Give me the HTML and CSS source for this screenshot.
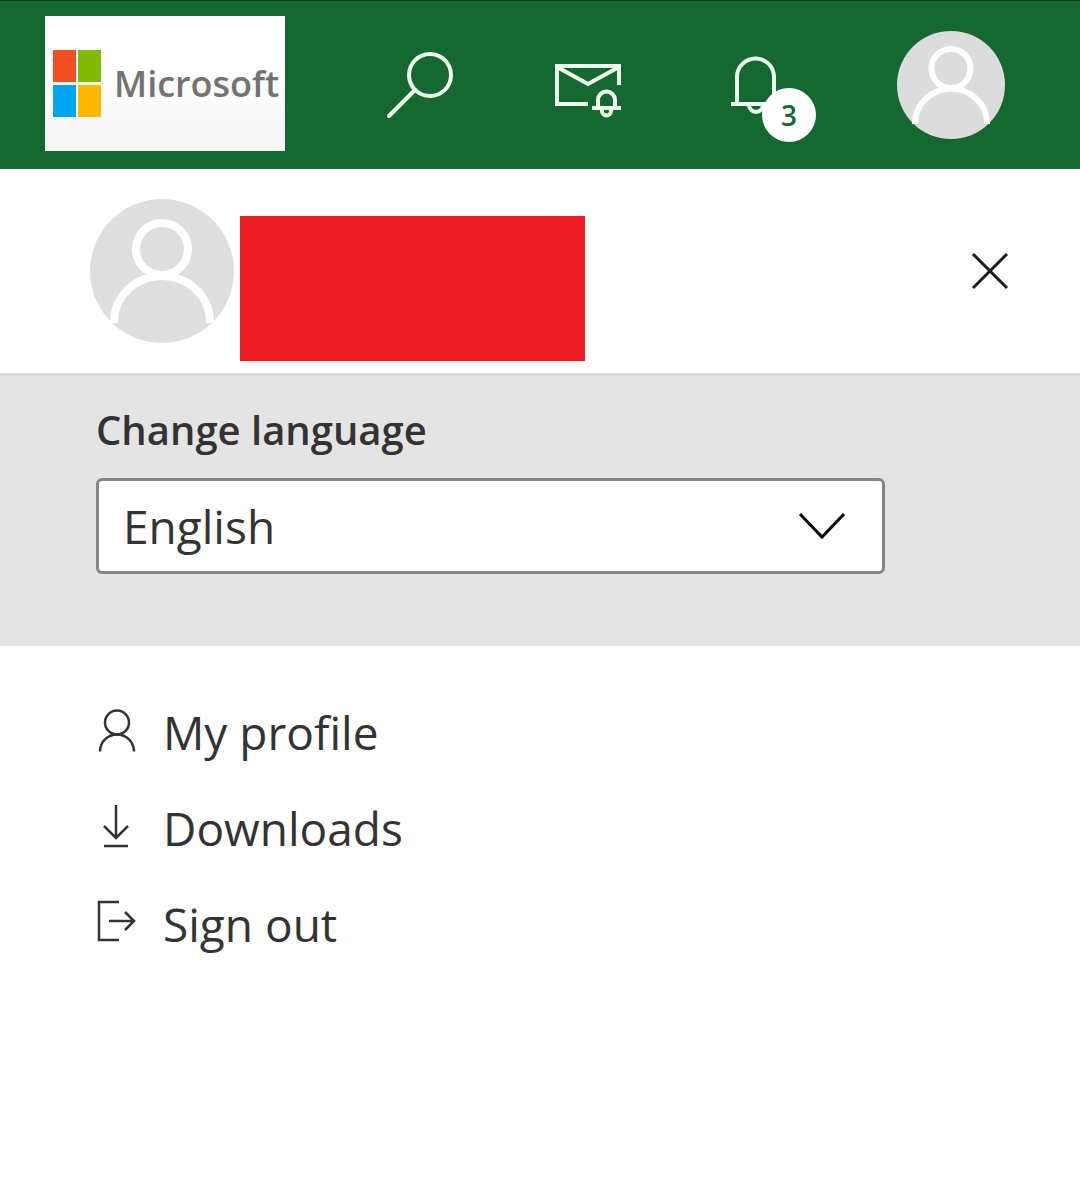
FILE: index.html
```html
<!DOCTYPE html>
<html lang="en">
<head>
<meta charset="utf-8">
<meta name="viewport" content="width=device-width, initial-scale=1">
<title>Account menu</title>
<link rel="stylesheet" href="styles.css">
</head>
<body>
<header class="topbar">
  <a class="logo" href="#" aria-label="Microsoft home">
    <svg class="logo-mark" viewBox="0 0 50 70" aria-hidden="true">
      <path fill="#f25022" d="M1 1h23v32H1z"/>
      <path fill="#7fba00" d="M26 1h23v32H26z"/>
      <path fill="#00a4ef" d="M1 36h23v32H1z"/>
      <path fill="#ffb900" d="M26 36h23v32H26z"/>
    </svg>
    <span class="logo-text">Microsoft</span>
  </a>
  <nav class="actions" aria-label="Site tools">
    <button class="icon-button" type="button" aria-label="Search">
      <svg viewBox="0 0 96 96"><g fill="none" stroke="#eeffee" stroke-width="4" stroke-linecap="round"><circle cx="55" cy="38" r="21"/><path d="M40 53 14 79"/></g></svg>
    </button>
    <button class="icon-button" type="button" aria-label="Messages">
      <svg viewBox="0 0 96 96"><g fill="none" stroke="#eeffee" stroke-width="4"><path d="M45 67H14V29h62v19M14 30l31 17 31-17M49 71h29M55 71v-8a8.500 8.500 0 0 1 17 0v8M59 71v3a4.500 4.500 0 0 0 9 0v-3"/></g></svg>
    </button>
    <button class="icon-button" type="button" aria-label="Notifications, 3 unread">
      <svg viewBox="0 0 96 96"><g fill="none" stroke="#eeffee" stroke-width="4"><path d="M20 67h48M26 67V40a18.500 18.500 0 0 1 37 0v27M38 68a7 7 0 0 0 14 0"/></g></svg>
      <span class="badge">3</span>
    </button>
  </nav>
  <button class="avatar avatar-small" type="button" aria-label="Account">
    <svg viewBox="0 0 144 144"><circle cx="72" cy="72" r="72" fill="#dcdcdc"/><g fill="none" stroke="#fff" stroke-width="8"><circle cx="72" cy="50" r="26"/><path d="M24 124v-1a48 46 0 0 1 96 0v1"/></g></svg>
  </button>
</header>
<main>
  <section class="profile" aria-label="Account">
    <div class="avatar">
      <svg viewBox="0 0 144 144" aria-hidden="true"><circle cx="72" cy="72" r="72" fill="#dedede"/><g fill="none" stroke="#fff" stroke-width="8"><circle cx="72" cy="50" r="26"/><path d="M24 124v-1a48 46 0 0 1 96 0v1"/></g></svg>
    </div>
    <div class="redaction"></div>
    <button class="icon-button close" type="button" aria-label="Close">
      <svg viewBox="0 0 96 96"><path d="m31 31 34 34m0-34L31 65" fill="none" stroke="#1b1b1b" stroke-width="3"/></svg>
    </button>
  </section>
  <section class="language">
    <label class="language-label" for="language">Change language</label>
    <div class="select">
      <select id="language"><option>English</option></select>
      <svg class="chevron" viewBox="0 0 48 28" aria-hidden="true"><path d="m2 2 22 23L46 2" fill="none" stroke="#000" stroke-width="3"/></svg>
    </div>
  </section>
  <nav aria-label="Account links">
    <ul class="menu">
      <li><a href="#"><svg viewBox="0 0 40 48" aria-hidden="true"><g fill="none" stroke="#333" stroke-width="2.500"><circle cx="21" cy="14.500" r="12"/><path d="M4 43.500a17 17 0 0 1 34 0"/></g></svg>My profile</a></li>
      <li><a href="#"><svg viewBox="0 0 40 48" aria-hidden="true"><path d="M20 1v33M8 22l12 12 12-12M8 42h24" fill="none" stroke="#333" stroke-width="2.500"/></svg>Downloads</a></li>
      <li><a href="#"><svg viewBox="0 0 40 48" aria-hidden="true"><path d="M23 2H3v38h20M13 21h25M29 12l9 9-9 9" fill="none" stroke="#333" stroke-width="2.500"/></svg>Sign out</a></li>
    </ul>
  </nav>
</main>
</body>
</html>
```
FILE: styles.css
```css
* { box-sizing: border-box; }

body {
  margin: 0;
  background: #fff;
  color: #333;
  font-family: "Open Sans", "Noto Sans", sans-serif;
  font-size: 46px;
}

button {
  padding: 0;
  border: 0;
  background: none;
  font: inherit;
}

svg {
  display: block;
  flex-shrink: 0;
}

.topbar {
  display: flex;
  align-items: center;
  justify-content: space-between;
  padding: 15px 75px 15px 45px;
  border-top: 1px solid #0b3a19;
  background: #156830;
}

.logo {
  display: flex;
  align-items: center;
  gap: 12px;
  width: 240px;
  height: 135px;
  margin-bottom: 3px;
  padding-left: 7px;
  background: linear-gradient(#fff 40%, #f5f5f5);
  color: #737373;
  text-decoration: none;
}

.logo-mark { width: 50px; height: 70px; }

.logo-text {
  font-size: 36px;
  font-weight: 600;
  line-height: 60px;
}

.actions { display: flex; gap: 72px; }

.icon-button {
  position: relative;
  width: 96px;
  height: 96px;
}

.badge {
  position: absolute;
  top: 51px;
  left: 51px;
  width: 54px;
  border-radius: 50%;
  background: #fff;
  color: #156830;
  font-size: 28px;
  font-weight: 600;
  line-height: 54px;
  text-align: center;
}

.avatar { width: 144px; height: 144px; }

.avatar-small { width: 108px; height: 108px; }

.profile {
  display: flex;
  align-items: center;
  gap: 6px;
  padding: 30px 42px 12px 90px;
  border-bottom: 3px solid #dcdcdc;
}

.profile .avatar { margin-bottom: 18px; }

.redaction {
  width: 345px;
  height: 145px;
  margin-top: 17px;
  background: #ed1c24;
}

.close { margin: 0 0 18px auto; }

.language {
  padding: 24px 96px 72px;
  background: #e4e4e4;
}

.language-label {
  display: block;
  margin-bottom: 18px;
  font-size: 40px;
  font-weight: 600;
  line-height: 60px;
}

.select {
  display: grid;
  align-items: center;
  max-width: 789px;
}

.select select {
  grid-area: 1 / 1;
  width: 100%;
  height: 96px;
  padding: 0 24px;
  border: 3px solid #858585;
  border-radius: 6px;
  appearance: none;
  background: #fff;
  color: #333;
  font: inherit;
}

.chevron {
  z-index: 1;
  grid-area: 1 / 1;
  justify-self: end;
  width: 48px;
  height: 28px;
  margin-right: 39px;
  pointer-events: none;
}

.menu {
  margin: 0;
  padding: 38px 96px;
  list-style: none;
}

.menu a {
  display: flex;
  align-items: center;
  gap: 27px;
  color: #333;
  line-height: 96px;
  text-decoration: none;
}

.menu svg { width: 40px; height: 48px; }
```
